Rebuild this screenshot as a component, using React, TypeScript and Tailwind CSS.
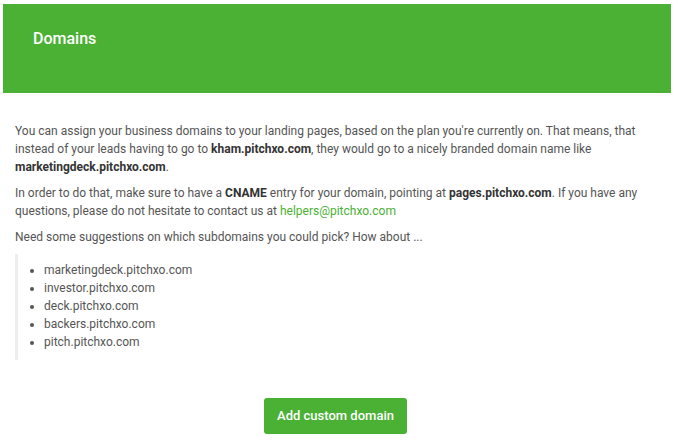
import React from "react";

export default function App() {
  const items = [
    "marketingdeck.pitchxo.com",
    "investor.pitchxo.com",
    "deck.pitchxo.com",
    "backers.pitchxo.com",
    "pitch.pitchxo.com",
  ];
  return (
    <div
      className="w-[676px] h-[443px] bg-white overflow-hidden"
      style={{ fontFamily: "Roboto, 'Liberation Sans', sans-serif" }}
    >
      <div className="ml-[3px] mt-[4px] w-[668px] h-[89px] bg-[#4ab134] pl-[30px] pt-[25px]">
        <h1 className="text-[16px] leading-[20px] font-medium text-white">Domains</h1>
      </div>
      <div className="pl-[15px] pr-[20px] pt-[29px] text-[12px] leading-[18px] text-[#555]">
        <p className="mb-[8px]">
          You can assign your business domains to your landing pages, based on the plan you're currently on. That means, that instead of your leads having to go to{" "}
          <b className="font-bold text-[#333]">kham.pitchxo.com</b>, they would go to a nicely branded domain name like{" "}
          <b className="font-bold text-[#333]">marketingdeck.pitchxo.com</b>.
        </p>
        <p className="mb-[8px]">
          In order to do that, make sure to have a <b className="font-bold text-[#333]">CNAME</b> entry for your domain, pointing at{" "}
          <b className="font-bold text-[#333]">pages.pitchxo.com</b>. If you have any questions, please do not hesitate to contact us at{" "}
          <span className="text-[#4ab134]">helpers@pitchxo.com</span>
        </p>
        <p className="mb-[8px]">Need some suggestions on which subdomains you could pick? How about ...</p>
        <div className="border-l-[3px] border-[#eeeeee] pt-[7px] pb-[9px] pl-[16px]">
          <ul className="list-disc pl-[10px] marker:text-[#555]">
            {items.map((i) => (
              <li key={i}>{i}</li>
            ))}
          </ul>
        </div>
        <div className="flex justify-center pt-[38px]">
          <button className="w-[143px] h-[36px] rounded-[3px] bg-[#4ab134] text-white text-[13px] font-medium">
            Add custom domain
          </button>
        </div>
      </div>
    </div>
  );
}
